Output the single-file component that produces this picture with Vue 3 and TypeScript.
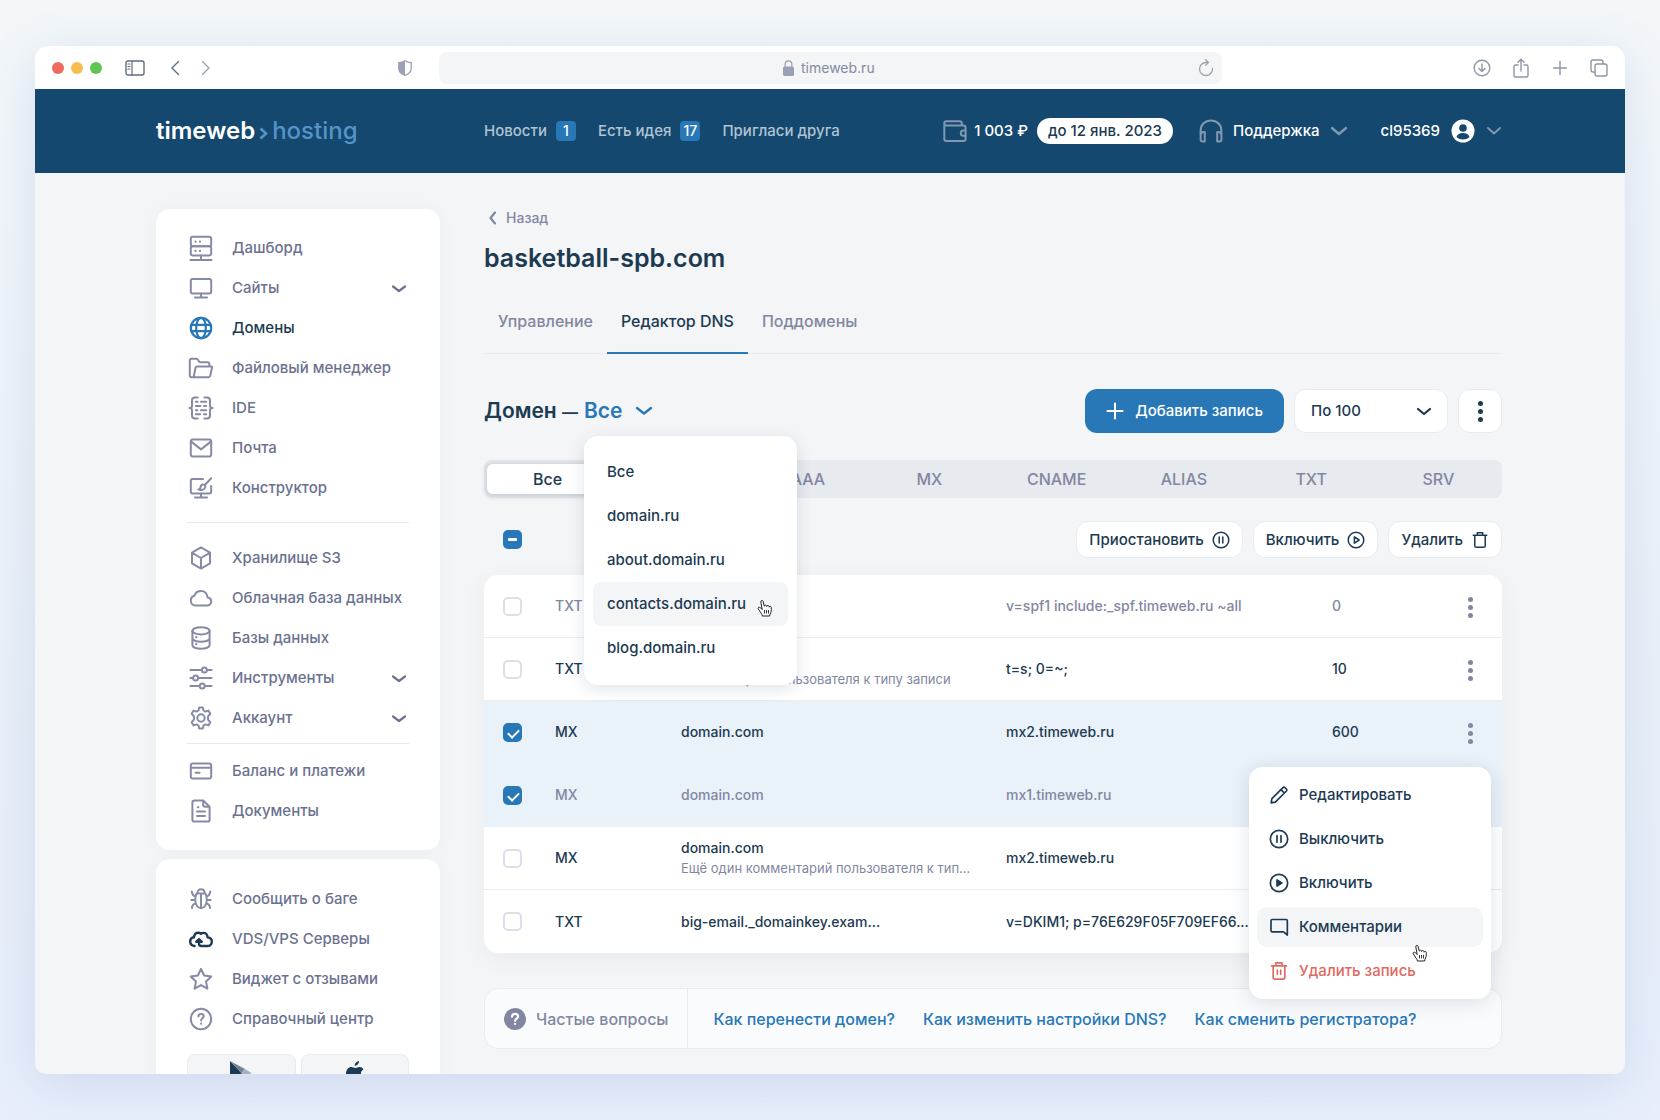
<script setup lang="ts">
import { ref } from 'vue'

interface NavItem {
  label: string
  icon: string
  expandable?: boolean
  active?: boolean
  dark?: boolean
}

interface DnsRecord {
  id: number
  type: string
  name: string
  comment?: string
  value: string
  priority: string
  muted?: boolean
  checked?: boolean
  menuOpen?: boolean
}

// Inner markup of the 24x24 stroke icons
const icons: Record<string, string> = {
  server:
    '<rect x="1.8" y="0.8" width="20.4" height="9.4" rx="2"/><rect x="1.8" y="10.2" width="20.4" height="9.2" rx="2"/><path d="M12 19.4V24M1.5 24h21"/><path d="M6.4 5.6h.1M10.9 5.6h.1M6.4 14.9h.1M10.9 14.9h.1" stroke-width="2.200"/>',
  monitor: '<rect x="1.8" y="3" width="20.4" height="14.6" rx="2"/><path d="M12 17.6v3.8M6 21.6h12"/>',
  globe:
    '<g stroke-width="2.200"><circle cx="12" cy="12" r="10.2"/><ellipse cx="12" cy="12" rx="4.800" ry="10.2"/><path d="M2.400 8.800h19.2M2.400 15.200h19.2"/></g>',
  folder:
    '<path d="M4.600 21.200h14.800c.9 0 1.600-.6 1.800-1.400l1.900-8.400c.1-.5-.2-1-.8-1H8.200c-.8 0-1.500.5-1.700 1.300L4.600 21.200H2.800c-1.100 0-2-.9-2-2V4.800c0-1.100.9-2 2-2h4.400c.6 0 1.100.2 1.500.7l1.700 2.300c.2.3.5.4.8.4h7.200c1.100 0 2 .9 2 2v2.200"/>',
  ide:
    '<path d="M8.600 1.400H6C4.300 1.400 3 2.700 3 4.400v5.400c0 1.400-.8 2.200-2.600 2.200C2.200 12 3 12.800 3 14.200v5.400c0 1.700 1.300 3 3 3h2.600M15.400 1.400H18c1.700 0 3 1.300 3 3v5.400c0 1.400.8 2.200 2.600 2.200-1.800 0-2.600.8-2.600 2.200v5.400c0 1.700-1.300 3-3 3h-2.600"/><path d="M6.800 5.800h1.800M12 5.800h5.200M6.800 10h4.600M15 10h2.200M6.800 14.200h1.600M12 14.200h5.200M6.800 18.200h4.400M14.800 18.200h2.400"/>',
  mail: '<rect x="1.8" y="3.600" width="20.4" height="16.800" rx="2"/><path d="M2.200 5.600 12 13.400l9.800-7.800"/>',
  brush:
    '<path d="M14 3H3.800c-1.100 0-2 .9-2 2v10.600c0 1.100.9 2 2 2h16.400c1.100 0 2-.9 2-2V10M12 17.600v3.800M6 21.600h12"/><path d="M22.200 2.200 15.800 9M9.200 13.400c1.900.1 2.200-1.200 2.400-2.400.3-1.600 1.400-2.600 2.800-2.400 1.700.2 2.300 1.700 1.700 3-.9 2-3.900 2.900-6.900 1.800z"/>',
  cube: '<path d="M12 1.400 21 6.600v10.800l-9 5.200-9-5.200V6.600zM3.200 6.800 12 12l8.800-5.200M12 12v10.400"/>',
  cloud: '<path d="M6.400 19.600h11.400c2.400 0 4.400-1.700 4.400-4 0-2.100-1.500-3.800-3.600-4.100C18.300 7.600 15.600 5 12 5c-3.200 0-5.600 1.900-6.500 4.700C3.300 10.200 1.800 12.100 1.800 14.600c0 2.800 2 5 4.600 5z"/>',
  database:
    '<ellipse cx="12" cy="4.800" rx="8.600" ry="3.600"/><path d="M3.400 4.800v14.400c0 2 3.800 3.600 8.600 3.600s8.600-1.600 8.600-3.600V4.800M3.400 12.200c0 2 3.800 3.600 8.600 3.600s8.600-1.600 8.600-3.600"/><path d="M7.200 11.200h.1M7.200 18.200h.1" stroke-width="2.200"/>',
  sliders:
    '<path d="M1.400 4h11.400M18 4h4.600M1.400 12h2.600M9.200 12h13.400M1.400 20h9.200M15.800 20h6.800"/><circle cx="15.400" cy="4" r="2.500"/><circle cx="6.600" cy="12" r="2.500"/><circle cx="13.200" cy="20" r="2.500"/>',
  gear:
    '<circle cx="12" cy="12" r="3.700"/><path d="M10.200 1.400h3.600l.7 3.100 1.900 1.100 3-1 1.900 3.200-2 2.200c-.4.500-.4.900-.4 2s0 1.500.4 2l2 2.200-1.900 3.200-3-1-1.900 1.100-.7 3.100h-3.600l-.7-3.100-1.900-1.100-3 1-1.900-3.200 2-2.200c.4-.5.4-.9.4-2s0-1.500-.4-2l-2-2.200 1.900-3.200 3 1 1.900-1.100z"/>',
  card: '<rect x="1.8" y="4.400" width="20.4" height="15.200" rx="2"/><path d="M2 8.800h20M6.600 13.800h4"/>',
  doc:
    '<path d="M14.200 1.400H5.600c-1.200 0-2.200 1-2.200 2.200v16.800c0 1.200 1 2.200 2.200 2.200h12.800c1.200 0 2.200-1 2.200-2.200V7.800zM14.200 1.600v4.200c0 1.100.9 2 2 2h4.200M8.800 8.200h.6M8 12.600h8M8 17h8"/>',
  bug:
    '<path d="M8.400 6.200C8.400 3.800 9.800 2.200 12 2.200s3.600 1.600 3.600 4M7.600 6.400h8.800c.9 1.500 1.400 3.600 1.400 6 0 5-2.400 8.800-5.800 8.800s-5.800-3.800-5.800-8.800c0-2.400.5-4.500 1.400-6zM12 6.400v14.800M6.600 9.400C4.400 9 3.200 7.600 2.800 4.600M17.400 9.400c2.200-.4 3.400-1.800 3.800-4.800M6.200 13H2.400M17.800 13h3.800M6.800 16.600c-2.200.2-3.500 1.600-3.900 4.400M17.200 16.600c2.200.2 3.500 1.600 3.900 4.400"/>',
  cloudUp:
    '<g stroke-width="2.400"><path d="M5.600 19C3 18.800 1.200 17 1.200 14.600c0-2.300 1.600-4 3.800-4.300.3-2.900 2-4.500 4.200-4.500 1.100 0 1.900.3 2.700 1 .7-.6 1.500-.9 2.500-.9 2.400 0 4 1.800 4.200 4.500 2.500.2 4.200 2 4.200 4.300 0 2.500-1.900 4.300-4.400 4.300h-6.200c-1.400 0-2.200-.8-2.200-2.200v-3"/><path d="M7.200 14.800 10 12.200l2.800 2.600z" fill="currentColor"/></g>',
  star: '<path d="m12 1.800 3.100 6.700 7.200.9-5.300 5 1.400 7.300-6.400-3.600-6.400 3.600L7 14.400l-5.300-5 7.200-.9z"/>',
  help: '<circle cx="12" cy="12" r="10.200"/><path d="M9.400 9.400c.1-1.500 1.100-2.400 2.700-2.400 1.500 0 2.600.9 2.600 2.300 0 2-2.600 2-2.600 4.100M12.100 16.600v.2" stroke-width="2"/>',
  pencil: '<path d="m2.600 21.400.9-5L16.800 3.100c.7-.7 1.700-.7 2.400 0l1.700 1.700c.7.700.7 1.700 0 2.400L7.600 20.500zM14.400 5.600l4 4"/>',
  pause: '<circle cx="12" cy="12" r="10.400"/><path d="M9.600 8v8M14.400 8v8"/>',
  play: '<circle cx="12" cy="12" r="10.400"/><path d="M9.800 7.800v8.400l6.400-4.200z"/>',
  playSolid: '<circle cx="12" cy="12" r="10.400"/><path d="M9.600 8.400v7.200l5.800-3.600z" fill="currentColor"/>',
  comment: '<path d="M22 21.600V4.400c0-.8-.6-1.400-1.400-1.400H3.800c-.8 0-1.400.6-1.400 1.400v12c0 .8.600 1.400 1.400 1.400h13.600z"/>',
  trash: '<path d="M3 5.800h18M8.400 5.600V2.200h7.200v3.400M5 6v13.600c0 1.200 1 2.200 2.200 2.200h9.600c1.200 0 2.200-1 2.200-2.200V6"/>',
  trashBars: '<path d="M3 5.800h18M8.400 5.600V2.200h7.200v3.400M5 6v13.600c0 1.200 1 2.200 2.200 2.200h9.600c1.200 0 2.200-1 2.200-2.200V6M10 11v5M14 11v5"/>',
  wallet:
    '<path d="M18.800 6.600V4.200c0-1.100-.9-2-2-2H3.400c-1.200 0-2.100.9-2.100 2.100v15.400c0 1.200.9 2.200 2.100 2.200h17c1.200 0 2.200-1 2.200-2.200V8.800c0-1.200-1-2.200-2.200-2.200H3.400c-1.200 0-2.100-.9-2.100-2.200M22.600 11.600h-2.200c-1.500 0-2.600 1.200-2.600 2.600s1.100 2.600 2.600 2.600h2.200"/>',
  headphones:
    '<path d="M1.600 17.400V11.600C1.600 5.800 6.200 1.400 12 1.400s10.400 4.400 10.400 10.200v5.800M1.600 16.400c0-2 1.400-3.400 3.400-3.400h.8v9.400H3.600c-1.100 0-2-.9-2-2zM22.400 16.400c0-2-1.400-3.400-3.400-3.400h-.8v9.400h2.200c1.100 0 2-.9 2-2z"/>',
}

const navGroups: NavItem[][] = [
  [
    { label: 'Дашборд', icon: 'server' },
    { label: 'Сайты', icon: 'monitor', expandable: true },
    { label: 'Домены', icon: 'globe', active: true },
    { label: 'Файловый менеджер', icon: 'folder' },
    { label: 'IDE', icon: 'ide' },
    { label: 'Почта', icon: 'mail' },
    { label: 'Конструктор', icon: 'brush' },
  ],
  [
    { label: 'Хранилище S3', icon: 'cube' },
    { label: 'Облачная база данных', icon: 'cloud' },
    { label: 'Базы данных', icon: 'database' },
    { label: 'Инструменты', icon: 'sliders', expandable: true },
    { label: 'Аккаунт', icon: 'gear', expandable: true },
  ],
  [
    { label: 'Баланс и платежи', icon: 'card' },
    { label: 'Документы', icon: 'doc' },
  ],
]

const supportItems: NavItem[] = [
  { label: 'Сообщить о баге', icon: 'bug' },
  { label: 'VDS/VPS Серверы', icon: 'cloudUp', dark: true },
  { label: 'Виджет с отзывами', icon: 'star' },
  { label: 'Справочный центр', icon: 'help' },
]

const tabs = ['Управление', 'Редактор DNS', 'Поддомены']
const activeTab = ref('Редактор DNS')

const types = ['Все', 'A', 'AAAA', 'MX', 'CNAME', 'ALIAS', 'TXT', 'SRV']
const activeType = ref('Все')

const domains = ['Все', 'domain.ru', 'about.domain.ru', 'contacts.domain.ru', 'blog.domain.ru']
const hoveredDomain = ref('contacts.domain.ru')
const selectedDomain = ref('Все')

const perPage = ref('100')

const records = ref<DnsRecord[]>([
  { id: 1, type: 'TXT', name: 'domain.com', value: 'v=spf1 include:_spf.timeweb.ru ~all', priority: '0', muted: true },
  { id: 2, type: 'TXT', name: 'domain.com', comment: 'Комментарий пользователя к типу записи', value: 't=s; 0=~;', priority: '10' },
  { id: 3, type: 'MX', name: 'domain.com', value: 'mx2.timeweb.ru', priority: '600', checked: true, menuOpen: true },
  { id: 4, type: 'MX', name: 'domain.com', value: 'mx1.timeweb.ru', priority: '', checked: true, muted: true },
  { id: 5, type: 'MX', name: 'domain.com', comment: 'Ещё один комментарий пользователя к типу записи', value: 'mx2.timeweb.ru', priority: '' },
  { id: 6, type: 'TXT', name: 'big-email._domainkey.example.com', value: 'v=DKIM1; p=76E629F05F709EF66...', priority: '' },
])

const bulkActions = [
  { label: 'Приостановить', icon: 'pause' },
  { label: 'Включить', icon: 'play' },
  { label: 'Удалить', icon: 'trash' },
]

const recordActions = [
  { label: 'Редактировать', icon: 'pencil' },
  { label: 'Выключить', icon: 'pause' },
  { label: 'Включить', icon: 'playSolid' },
  { label: 'Комментарии', icon: 'comment', hovered: true },
  { label: 'Удалить запись', icon: 'trashBars', danger: true },
]

const questions = ['Как перенести домен?', 'Как изменить настройки DNS?', 'Как сменить регистратора?']
</script>

<template>
  <div class="page">
    <div class="window">
      <div class="chrome">
        <div class="chrome-left">
          <div class="lights"><i class="red"></i><i class="yellow"></i><i class="green"></i></div>
          <button class="plain tool-panel" aria-label="Боковая панель">
            <svg width="20" height="16" viewBox="0 0 20 16" class="line"><rect x="1" y="1" width="18" height="14" rx="2" /><path d="M7 1v14M3 4h2M3 6.500h2M3 9h2" stroke-width="1.200" /></svg>
          </button>
          <button class="plain tool-back" aria-label="Назад">
            <svg width="10" height="16" viewBox="0 0 10 16" class="line"><path d="M8.500 1.500 2 8l6.500 6.500" /></svg>
          </button>
          <button class="plain tool-next" aria-label="Вперёд">
            <svg width="10" height="16" viewBox="0 0 10 16" class="line"><path d="M1.500 1.500 8 8l-6.500 6.500" /></svg>
          </button>
          <svg class="shield" width="14" height="16" viewBox="0 0 14 16"><path d="M7 .8c2 1.300 4 1.800 6.200 1.900v6.100c0 3.200-2.600 5.300-6.200 6.500C3.400 14.100.8 12 .8 8.800V2.700C3 2.600 5 2.100 7 .8z" fill="none" stroke="currentColor" stroke-width="1.300" /><path d="M7 .8v14.500C3.400 14.100.8 12 .8 8.800V2.700C3 2.600 5 2.100 7 .8z" fill="currentColor" /></svg>
        </div>
        <div class="address">
          <svg width="11" height="16" viewBox="0 0 11 16"><rect x="0" y="6.500" width="11" height="9.500" rx="1.500" fill="currentColor" /><path d="M2.200 7V4.200a3.300 3.300 0 0 1 6.600 0V7" fill="none" stroke="currentColor" stroke-width="1.300" /></svg>
          <input class="url" type="text" value="timeweb.ru" aria-label="Адрес" />
          <button class="plain reload" aria-label="Обновить">
            <svg width="16" height="18" viewBox="0 0 16 18" class="line"><path d="M14.500 9.500a6.500 6.500 0 1 1-6.500-6h2M7.500.8l3 2.700-3 2.900" stroke-width="1.300" /></svg>
          </button>
        </div>
        <div class="chrome-tools">
          <button class="plain" aria-label="Загрузки"><svg width="18" height="18" viewBox="0 0 18 18" class="line"><circle cx="9" cy="9" r="7.800" /><path d="M9 5v7M6 9.400 9 12.400l3-3" /></svg></button>
          <button class="plain" aria-label="Поделиться"><svg width="18" height="20" viewBox="0 0 18 20" class="line"><path d="M6 7H3.500C2.700 7 2 7.700 2 8.500v9c0 .8.700 1.500 1.500 1.500h11c.8 0 1.500-.7 1.500-1.500v-9c0-.8-.7-1.500-1.500-1.500H12M9 13V1.500M6 4.300 9 1.300l3 3" /></svg></button>
          <button class="plain" aria-label="Новая вкладка"><svg width="18" height="18" viewBox="0 0 18 18" class="line"><path d="M9 2.500v13M2.500 9h13" /></svg></button>
          <button class="plain" aria-label="Все вкладки"><svg width="18" height="18" viewBox="0 0 18 18" class="line"><rect x="5" y="5" width="12" height="12" rx="2" /><path d="M5 13H3c-1.100 0-2-.9-2-2V3c0-1.100.9-2 2-2h8c1.100 0 2 .9 2 2v2" /></svg></button>
        </div>
      </div>

      <header class="header">
        <div class="container header-inner">
          <a class="logo" href="#">timeweb<svg width="9" height="13" viewBox="0 0 9 13"><path d="M1.500 1.500 7 6.500l-5.500 5" fill="none" stroke="currentColor" stroke-width="2.600" /></svg><span>hosting</span></a>
          <nav class="top-nav">
            <a href="#">Новости <b>1</b></a>
            <a href="#">Есть идея <b>17</b></a>
            <a href="#">Пригласи друга</a>
          </nav>
          <div class="account">
            <svg class="icon head-icon" width="24" height="24" viewBox="0 0 24 24" v-html="icons.wallet"></svg>
            <span class="balance">1 003 ₽</span>
            <span class="paid">до 12 янв. 2023</span>
            <button class="plain support">
              <svg class="icon head-icon" width="24" height="24" viewBox="0 0 24 24" v-html="icons.headphones"></svg>
              <span>Поддержка</span>
              <svg class="arrow" width="18" height="10" viewBox="0 0 18 10"><path d="m2 2 7 6 7-6" stroke-width="2.400" /></svg>
            </button>
            <button class="plain user">
              <span>cl95369</span>
              <svg width="24" height="24" viewBox="0 0 24 24"><circle cx="12" cy="12" r="11.500" fill="#fff" /><circle cx="12" cy="9" r="3.800" fill="#15486f" /><path d="M5.500 18c.6-2.600 3.200-4 6.500-4s5.900 1.400 6.500 4c-1.700 1.700-4 2.500-6.500 2.500S7.200 19.700 5.500 18z" fill="#15486f" /></svg>
              <svg class="arrow" width="16" height="10" viewBox="0 0 16 10"><path d="m2 2 6 5.500L14 2" stroke-width="2" /></svg>
            </button>
          </div>
        </div>
      </header>

      <div class="container body">
        <aside class="sidebar">
          <nav class="card">
            <ul v-for="(group, index) in navGroups" :key="index" class="group">
              <li v-for="item in group" :key="item.label">
                <a href="#" class="nav-link" :class="{ active: item.active }">
                  <svg class="icon" width="24" height="24" viewBox="0 0 24 24" v-html="icons[item.icon]"></svg>
                  <span>{{ item.label }}</span>
                  <svg v-if="item.expandable" class="arrow" width="16" height="10" viewBox="0 0 16 10"><path d="m2 2.500 6 4.500 6-4.500" stroke-width="2.200" /></svg>
                </a>
              </li>
            </ul>
          </nav>
          <nav class="card">
            <ul class="group">
              <li v-for="item in supportItems" :key="item.label">
                <a href="#" class="nav-link" :class="{ dark: item.dark }">
                  <svg class="icon" width="24" height="24" viewBox="0 0 24 24" v-html="icons[item.icon]"></svg>
                  <span>{{ item.label }}</span>
                </a>
              </li>
            </ul>
            <div class="stores">
              <a href="#" class="store" aria-label="Google Play"><svg width="22" height="24" viewBox="0 0 22 24"><path d="M0 0v24l11.500-12z" fill="#1c3a52" /><path d="m0 0 11.500 12 3.500-4z" fill="#6f8292" /><path d="M0 24 11.500 12l3.500 4z" fill="#4b6275" /><path d="m11.500 12 3.500-4 6.500 4-6.500 4z" fill="#a5b1bc" /></svg></a>
              <a href="#" class="store" aria-label="App Store"><svg width="20" height="24" viewBox="0 0 20 24"><path d="M14 0c.2 2.600-2 5-4.300 5C9.400 2.500 11.600.3 14 0zM18.400 8.400c-1.600 1-2.500 2.300-2.500 4 0 2 1.200 3.500 3 4.300-1 3-3 6.300-5 6.300-1.400 0-2-.8-3.600-.8s-2.300.8-3.600.8C3.800 23 1 17.600 1 13c0-4.400 2.600-7 5.400-7 1.600 0 2.800 1 3.900 1 1 0 2.500-1.100 4.400-1.100 1.300 0 2.800.7 3.700 2.500z" fill="#1c3a52" /></svg></a>
            </div>
          </nav>
        </aside>

        <main class="main">
          <a href="#" class="back">
            <svg class="arrow" width="9" height="14" viewBox="0 0 9 14"><path d="M7 1.500 2.500 7 7 12.500" stroke-width="2.200" /></svg>
            Назад
          </a>
          <h1>basketball-spb.com</h1>

          <div class="tabs" role="tablist">
            <button v-for="tab in tabs" :key="tab" class="plain tab" role="tab" :class="{ current: tab === activeTab }" :aria-selected="tab === activeTab" @click="activeTab = tab">{{ tab }}</button>
          </div>

          <div class="toolbar">
            <h2>Домен <span class="dash">—</span></h2>
            <div class="domain-picker">
              <button class="plain picker-button" aria-haspopup="listbox" aria-expanded="true">
                {{ selectedDomain }}
                <svg class="arrow" width="18" height="12" viewBox="0 0 18 12"><path d="m2 3 7 5.500L16 3" stroke-width="2.400" /></svg>
              </button>
              <ul class="picker-menu" role="listbox" aria-label="Домен">
                <li v-for="domain in domains" :key="domain" role="option" :aria-selected="domain === selectedDomain" :class="{ hovered: domain === hoveredDomain }">
                  {{ domain }}
                  <svg v-if="domain === hoveredDomain" class="hand" width="16" height="18" viewBox="0 0 16 18"><path d="M5.200 10.600 3.600 8.800C2.800 8 1.400 8 1.100 9c-.2.600.3 1.200.8 1.900l2.500 3.700c.5.700.7 1 .9 2.400h7.400c0-1.300.5-2 1-3.200.4-1 .6-2.100.6-3.400V8.600c0-1.500-1.900-1.700-2.100-.4 0-1.900-2.300-2.300-2.500-.7-.1-1.700-2.300-1.800-2.400-.3L6.100 2.400c-.4-1.500-2.600-1.100-2.300.6z" fill="#fff" stroke="#222" stroke-width="1" /><path d="M7.500 11v3.500M9.500 11v3.500M11.500 11v3.500" stroke="#222" stroke-width=".9" /></svg>
                </li>
              </ul>
            </div>
            <div class="controls">
              <button class="add">
                <svg width="18" height="18" viewBox="0 0 18 18"><path d="M9 1.500v15M1.500 9h15" stroke="#fff" stroke-width="2" stroke-linecap="round" /></svg>
                Добавить запись
              </button>
              <div class="select">
                <select v-model="perPage" aria-label="Записей на странице">
                  <option value="50">По 50</option>
                  <option value="100">По 100</option>
                </select>
                <svg class="arrow" width="16" height="10" viewBox="0 0 16 10"><path d="m2 2 6 5 6-5" stroke-width="2.200" /></svg>
              </div>
              <button class="more" aria-label="Ещё"><i></i><i></i><i></i></button>
            </div>
          </div>

          <div class="segments">
            <button v-for="type in types" :key="type" class="plain segment" :class="{ current: type === activeType }" @click="activeType = type">{{ type }}</button>
          </div>

          <div class="bulk">
            <input type="checkbox" class="check" checked data-mixed aria-label="Выбрать все" />
            <div class="bulk-actions">
              <button v-for="action in bulkActions" :key="action.label" class="pill">
                {{ action.label }}
                <svg class="icon" width="18" height="18" viewBox="0 0 24 24" v-html="icons[action.icon]"></svg>
              </button>
            </div>
          </div>

          <table class="records">
            <tbody>
              <tr v-for="record in records" :key="record.id" :class="{ muted: record.muted, selected: record.checked }">
                <td class="c-check"><input v-model="record.checked" type="checkbox" class="check" :aria-label="'Выбрать ' + record.name" /></td>
                <td class="c-type">{{ record.type }}</td>
                <td class="c-name">
                  <div class="name" :class="{ short: record.name.length > 20 }">{{ record.name }}</div>
                  <div v-if="record.comment" class="comment">{{ record.comment }}</div>
                </td>
                <td class="c-value">{{ record.value }}</td>
                <td class="c-priority">{{ record.priority }}</td>
                <td class="c-more">
                  <button class="plain dots" aria-label="Действия"><i></i><i></i><i></i></button>
                  <div v-if="record.menuOpen" class="record-menu" role="menu">
                    <button v-for="action in recordActions" :key="action.label" class="plain menu-item" role="menuitem" :class="{ hovered: action.hovered, danger: action.danger }">
                      <svg class="icon" width="20" height="20" viewBox="0 0 24 24" v-html="icons[action.icon]"></svg>
                      {{ action.label }}
                      <svg v-if="action.hovered" class="hand" width="16" height="18" viewBox="0 0 16 18"><path d="M5.200 10.600 3.600 8.800C2.800 8 1.400 8 1.100 9c-.2.600.3 1.200.8 1.900l2.500 3.700c.5.700.7 1 .9 2.400h7.400c0-1.300.5-2 1-3.200.4-1 .6-2.100.6-3.400V8.600c0-1.500-1.900-1.700-2.100-.4 0-1.900-2.300-2.300-2.500-.7-.1-1.700-2.300-1.800-2.400-.3L6.100 2.400c-.4-1.500-2.600-1.100-2.300.6z" fill="#fff" stroke="#222" stroke-width="1" /><path d="M7.500 11v3.500M9.500 11v3.500M11.500 11v3.500" stroke="#222" stroke-width=".9" /></svg>
                    </button>
                  </div>
                </td>
              </tr>
            </tbody>
          </table>

          <div class="faq">
            <div class="faq-title">
              <svg width="22" height="22" viewBox="0 0 22 22"><circle cx="11" cy="11" r="11" fill="#8287a1" /><path d="M8 8.600c.1-1.800 1.300-2.800 3.100-2.800s3 1 3 2.600c0 2.200-3 2.200-3 4.400M11.100 15.800v.2" fill="none" stroke="#fff" stroke-width="2.200" stroke-linecap="round" /></svg>
              Частые вопросы
            </div>
            <div class="faq-links">
              <a v-for="question in questions" :key="question" href="#">{{ question }}</a>
            </div>
          </div>
        </main>
      </div>
    </div>
  </div>
</template>

<style>
body {
  margin: 0;
  background: #e8eefa;
}
</style>

<style scoped>
* {
  box-sizing: border-box;
}

.page {
  height: 100vh;
  padding: 46px 35px;
  background: linear-gradient(#f3f7fa, #eaf0f9 60%, #e8eefb);
  color: #1c3a52;
  font: 500 15px/20px Inter, 'Noto Sans', sans-serif;
}

a {
  color: inherit;
  text-decoration: none;
}

ul {
  list-style: none;
  margin: 0;
  padding: 0;
}

button,
input,
select {
  color: inherit;
  font: inherit;
}

.plain {
  display: flex;
  align-items: center;
  padding: 0;
  border: 0;
  background: none;
}

svg {
  display: block;
  flex: none;
  overflow: visible;
}

.icon,
.line,
.arrow {
  fill: none;
  stroke: currentColor;
  stroke-width: 2;
  stroke-linecap: round;
  stroke-linejoin: round;
}

.line {
  stroke-width: 1.4;
}

.window {
  display: flex;
  flex-direction: column;
  height: 100%;
  border-radius: 14px 14px 10px 10px;
  background: #f4f5f7;
  box-shadow: 0 10px 50px #5a7fb02e;
  overflow: hidden;
}

/* Browser chrome */
.chrome {
  flex: none;
  display: grid;
  grid-template-columns: 1fr minmax(0, 783px) 1fr;
  align-items: center;
  height: 43px;
  padding: 0 17px;
  background: #fff;
  color: #5c6f80;
}

.chrome-left {
  display: flex;
  align-items: center;
}

.lights {
  display: flex;
  gap: 7px;
}

.lights i {
  width: 12px;
  height: 12px;
  border-radius: 50%;
}

.red {
  background: #ee6a5f;
}

.yellow {
  background: #f5bd4f;
}

.green {
  background: #61c554;
}

.tool-panel {
  margin-left: 23px;
}

.tool-back {
  margin-left: 25px;
}

.tool-next {
  margin-left: 21px;
  color: #9aa5b1;
}

.shield {
  margin: 0 27px 0 auto;
  color: #9ca0b4;
}

.address {
  position: relative;
  display: flex;
  align-items: center;
  justify-content: center;
  gap: 7px;
  height: 32px;
  border-radius: 8px;
  background: #f4f5f7;
  color: #9ca0b4;
}

.url {
  width: 76px;
  padding: 0;
  border: 0;
  background: none;
  color: #8589a3;
  font-weight: 400;
  font-size: 14px;
}

.reload {
  position: absolute;
  right: 8px;
}

.chrome-tools {
  display: flex;
  justify-content: flex-end;
  gap: 21px;
  color: #8c98a5;
}

/* Header */
.container {
  margin: 0 123px 0 121px;
}

.header {
  flex: none;
  background: #15486f;
  color: #fff;
}

.header-inner {
  display: flex;
  align-items: center;
  height: 84px;
}

.logo {
  display: flex;
  align-items: center;
  width: 328px;
  gap: 4px;
  font-weight: 600;
  font-size: 24px;
  line-height: 30px;
}

.logo svg {
  margin-top: 4px;
}

.logo svg,
.logo span {
  color: #5594c8;
  font-weight: 500;
}

.top-nav {
  display: flex;
  gap: 22px;
  color: #b0c3d2;
}

.top-nav a {
  display: flex;
  align-items: center;
  gap: 9px;
}

.top-nav b {
  width: 20px;
  height: 20px;
  border-radius: 4px;
  background: #2878b8;
  color: #fff;
  font-weight: 500;
  font-size: 14px;
  text-align: center;
}

.account {
  display: flex;
  align-items: center;
  margin-left: auto;
}

.head-icon,
.account .arrow {
  color: #8099b0;
}

.balance {
  margin-left: 7px;
}

.paid {
  margin-left: 9px;
  padding: 3px 11px;
  border-radius: 14px;
  background: #fff;
  color: #1c3a52;
}

.support {
  gap: 10px;
  margin-left: 26px;
}

.user {
  gap: 11px;
  margin-left: 33px;
}

/* Layout */
.body {
  display: grid;
  grid-template-columns: 284px minmax(0, 1fr);
  gap: 44px;
  flex: 1;
  min-height: 0;
  padding-top: 36px;
}

/* Sidebar */
.card {
  padding: 19px 31px;
  border-radius: 14px;
  background: #fff;
  box-shadow: 0 0 20px #1c3a5208;
}

.card + .card {
  margin-top: 9px;
  padding-top: 20px;
}

.group + .group {
  margin-top: 14px;
  padding-top: 15px;
  border-top: 1px solid #e6e9f0;
}

.group:nth-child(3) {
  margin-top: 5px;
  padding-top: 7px;
}

.nav-link {
  display: flex;
  align-items: center;
  gap: 19px;
  height: 40px;
  padding-left: 2px;
  color: #6b7290;
  white-space: nowrap;
}

.nav-link .icon {
  color: #868ba5;
}

.nav-link .arrow {
  margin: 2px 2px 0 auto;
}

.nav-link.active {
  color: #1c3a52;
}

.nav-link.active .icon {
  color: #2878b8;
}

.nav-link.dark .icon {
  color: #1c3a52;
}

.stores {
  display: grid;
  grid-template-columns: 1fr 1fr;
  gap: 5px;
  margin-top: 15px;
}

.store {
  display: flex;
  justify-content: center;
  height: 40px;
  padding-top: 6px;
  border: 1px solid #e9ebf0;
  border-radius: 8px;
  background: #f4f5f7;
}

/* Main column */
.back {
  display: flex;
  align-items: center;
  gap: 9px;
  width: max-content;
  padding-left: 4px;
  color: #8287a1;
  font-size: 14px;
  line-height: 18px;
}

h1 {
  margin: 15px 0 0;
  font-weight: 600;
  font-size: 25px;
  line-height: 32px;
}

.tabs {
  display: flex;
  margin-top: 30px;
  border-bottom: 1px solid #e9ebf0;
}

.tab {
  height: 50px;
  margin-bottom: -1px;
  padding: 0 14px 14px;
  border-bottom: 2px solid transparent;
  color: #8287a1;
  font-size: 16px;
}

.tab.current {
  border-color: #2878b8;
  color: #1c3a52;
}

.toolbar {
  display: flex;
  align-items: center;
  margin-top: 35px;
}

h2,
.picker-button {
  font-weight: 600;
  font-size: 21px;
  line-height: 28px;
}

h2 {
  margin: 0 6px 0 0;
}

.dash {
  font-size: 16px;
}

.domain-picker {
  position: relative;
  z-index: 2;
}

.picker-button {
  gap: 12px;
  color: #2878b8;
}

.picker-menu {
  position: absolute;
  top: 39px;
  left: 0;
  width: 213px;
  padding: 14px 9px 15px;
  border-radius: 14px;
  background: #fff;
  box-shadow: 0 4px 16px #1c3a5224;
}

.picker-menu li {
  position: relative;
  padding: 12px 14px;
  border-radius: 8px;
}

.picker-menu .hovered,
.record-menu .hovered {
  background: #f4f5f7;
}

.hand {
  position: absolute;
  top: 17px;
  right: 15px;
}

.controls {
  display: flex;
  gap: 10px;
  margin-left: auto;
}

.add {
  display: flex;
  align-items: center;
  gap: 11px;
  height: 44px;
  padding: 0 21px;
  border: 0;
  border-radius: 12px;
  background: #2878b8;
  color: #fff;
}

.select {
  position: relative;
}

.select select {
  width: 154px;
  height: 44px;
  padding: 0 16px;
  border: 1px solid #e9ebf0;
  border-radius: 12px;
  background: #fff;
  appearance: none;
}

.select .arrow {
  position: absolute;
  top: 18px;
  right: 16px;
  pointer-events: none;
}

.more,
.dots {
  display: flex;
  flex-direction: column;
  align-items: center;
  justify-content: center;
  gap: 3px;
}

.more {
  width: 44px;
  height: 44px;
  padding: 0;
  border: 1px solid #e9ebf0;
  border-radius: 12px;
  background: #fff;
}

.more i,
.dots i {
  width: 5px;
  height: 5px;
  border-radius: 50%;
  background: currentColor;
}

.segments {
  display: grid;
  grid-template-columns: repeat(8, 1fr);
  height: 38px;
  margin-top: 27px;
  border-radius: 8px;
  background: #e7eaef;
}

.segment {
  justify-content: center;
  color: #8287a1;
  font-size: 16px;
}

.segment.current {
  margin: 4px 3px;
  border-radius: 6px;
  background: #fff;
  color: #1c3a52;
  box-shadow: 0 1px 5px 2px #1c3a5224;
}

.bulk {
  display: flex;
  align-items: center;
  justify-content: space-between;
  margin-top: 23px;
  padding-left: 19px;
}

.bulk-actions {
  display: flex;
  gap: 10px;
}

.pill {
  display: flex;
  align-items: center;
  gap: 8px;
  height: 37px;
  padding: 0 12px;
  border: 1px solid #e9ebf0;
  border-radius: 12px;
  background: #fff;
}

.check {
  position: relative;
  display: block;
  width: 19px;
  height: 19px;
  margin: 0;
  border: 2px solid #dcdfe9;
  border-radius: 5px;
  background: #fff;
  appearance: none;
}

.check:checked {
  border-color: #2878b8;
  background: #2878b8;
}

.check:checked::after {
  content: '';
  position: absolute;
  top: 2px;
  left: 5px;
  width: 5px;
  height: 9px;
  border: solid #fff;
  border-width: 0 2px 2px 0;
  transform: rotate(45deg);
}

.check[data-mixed]:checked::after {
  top: 6px;
  left: 3px;
  width: 9px;
  height: 3px;
  border: 0;
  border-radius: 1px;
  background: #fff;
  transform: none;
}

/* Records */
.records {
  width: 100%;
  margin-top: 17px;
  border-spacing: 0;
  border-radius: 14px;
  background: #fff;
  box-shadow: 0 6px 24px #1c3a520d;
  table-layout: fixed;
  font-size: 14px;
}

td {
  height: 63px;
  padding: 0;
  border-bottom: 1px solid #ebedf1;
  white-space: nowrap;
}

tr:last-child td {
  border-bottom: 0;
}

.selected td {
  border-color: #e9f1f9;
  background: #e9f1f9;
}

.muted {
  color: #8287a1;
}

.c-check {
  width: 71px;
  padding-left: 19px;
}

.c-type {
  width: 126px;
}

.c-name {
  width: 325px;
}

.c-value {
  width: 326px;
}

.c-more {
  position: relative;
  width: 64px;
}

.name {
  overflow: hidden;
  text-overflow: ellipsis;
  line-height: 20px;
}

.short {
  width: 200px;
}

.comment {
  width: 292px;
  overflow: hidden;
  color: #8287a1;
  font-weight: 400;
  font-size: 13px;
  line-height: 20px;
  text-overflow: ellipsis;
}

.dots {
  width: 20px;
  height: 24px;
  margin: 2px 0 0 22px;
  color: #8287a1;
}

.record-menu {
  position: absolute;
  z-index: 1;
  top: 66px;
  right: 11px;
  display: grid;
  gap: 4px;
  width: 242px;
  padding: 8px;
  border-radius: 14px;
  background: #fff;
  box-shadow: 0 4px 20px #1c3a5224;
  color: #1c3a52;
}

.menu-item {
  position: relative;
  gap: 10px;
  height: 40px;
  padding-left: 12px;
  border-radius: 10px;
  font-size: 15px;
}

.menu-item .hand {
  top: 37px;
  right: 55px;
}

.danger {
  color: #de6a61;
}

.faq {
  display: flex;
  height: 61px;
  margin-top: 35px;
  border: 1px solid #e9ebf0;
  border-radius: 14px;
  background: #fafbfd;
  font-size: 16px;
  white-space: nowrap;
}

.faq-title,
.faq-links {
  display: flex;
  align-items: center;
}

.faq-title {
  gap: 10px;
  padding: 0 18px 0 19px;
  border-right: 1px solid #e9ebf0;
  color: #8287a1;
}

.faq-links {
  gap: 28px;
  padding-left: 26px;
  color: #2878b8;
}
</style>
